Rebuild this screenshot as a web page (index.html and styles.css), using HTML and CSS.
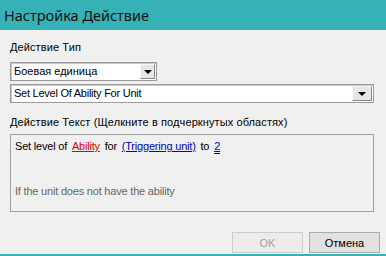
FILE: index.html
```html
<!DOCTYPE html>
<html lang="ru">
<head>
    <meta charset="UTF-8">
    <title>Настройка Действие</title>
    <link rel="stylesheet" href="styles.css">
</head>
<body>

  <div class="window">
    <div class="titlebar">Настройка Действие</div>

    <div class="content">
      <div class="label">Действие Тип</div>

      <div class="combo combo-short">
        <span class="combo-text cyr">Боевая единица</span>
        <span class="combo-btn"><span class="arrow"></span></span>
      </div>

      <div class="combo combo-wide">
        <span class="combo-text">Set Level Of Ability For Unit</span>
        <span class="combo-btn"><span class="arrow"></span></span>
      </div>

      <div class="label label-text">Действие Текст (Щелкните в подчеркнутых областях)</div>

      <div class="action-text">
        <div class="line">
          Set level of <a class="param red">Ability</a> for <a class="param blue">(Triggering unit)</a> to <a class="param blue double">2</a>
        </div>
        <div class="hint">If the unit does not have the ability</div>
      </div>

      <div class="buttons">
        <button class="btn" disabled>OK</button>
        <button class="btn">Отмена</button>
      </div>
    </div>
  </div>

</body>
</html>
```

FILE: styles.css
```css
html, body {
    margin: 0;
    padding: 0;
}

body {
    width: 386px;
    height: 256px;
    background-color: #f0f0f0;
    font-family: "Liberation Sans", Arial, sans-serif;
    font-size: 11px;
    color: #000;
    overflow: hidden;
}

.window {
    height: 254px;
    border-bottom: 2px solid #36b1b5;
    display: flex;
    flex-direction: column;
}

.titlebar {
    height: 30px;
    line-height: 30px;
    padding-left: 4px;
    background-color: #36b1b5;
    color: #111;
    font-family: "Noto Sans", sans-serif;
    font-size: 14.5px;
}

.content {
    padding: 10px 12px 0 10px;
    display: flex;
    flex-direction: column;
}

.label {
    line-height: 14px;
    letter-spacing: 0.1px;
}

.label-text {
    margin-top: 12px;
}

.combo {
    height: 17px;
    background-color: #fff;
    border: 1px solid #9a9a9a;
    box-shadow: inset 1px 1px 0 #c8c8c8;
    display: flex;
    align-items: center;
    justify-content: space-between;
    margin-top: 8px;
}

.combo-short {
    width: 145px;
}

.combo-wide {
    margin-top: 3px;
}

.combo-text {
    padding-left: 3px;
    letter-spacing: -0.25px;
    line-height: 17px;
}

.combo-text.cyr {
    letter-spacing: 0;
}

.combo-btn {
    width: 13px;
    height: 13px;
    margin-right: 1px;
    background-color: #e6e6e6;
    border: 1px solid;
    border-color: #f8f8f8 #8a8a8a #8a8a8a #f8f8f8;
    display: flex;
    align-items: center;
    justify-content: center;
}

.combo-wide .combo-btn {
    width: 18px;
}

.arrow {
    width: 0;
    height: 0;
    border-left: 4px solid transparent;
    border-right: 4px solid transparent;
    border-top: 4px solid #000;
    margin-top: 1px;
}

.action-text {
    margin-top: 5px;
    height: 66px;
    border: 1px solid #a0a0a0;
    padding: 5px 4px;
    display: flex;
    flex-direction: column;
}

.line {
    line-height: 13px;
    letter-spacing: -0.2px;
}

.param {
    text-decoration: underline;
    margin: 0 2px;
}

.red {
    color: #e00000;
}

.blue {
    color: #0000c8;
}

.double {
    text-decoration-style: double;
}

.hint {
    margin-top: 32px;
    line-height: 13px;
    color: #666;
    letter-spacing: -0.2px;
}

.buttons {
    margin-top: 20px;
    display: flex;
    justify-content: flex-end;
    gap: 6px;
    margin-right: -6px;
}

.btn {
    width: 71px;
    height: 21px;
    padding: 0;
    margin: 0;
    font-family: "Liberation Sans", Arial, sans-serif;
    font-size: 11px;
    color: #000;
    background-color: #e1e1e1;
    border: 1px solid #adadad;
    border-radius: 0;
}

.btn:disabled {
    color: #a0a0a0;
    background-color: #ececec;
    border-color: #cdcdcd;
}
```
